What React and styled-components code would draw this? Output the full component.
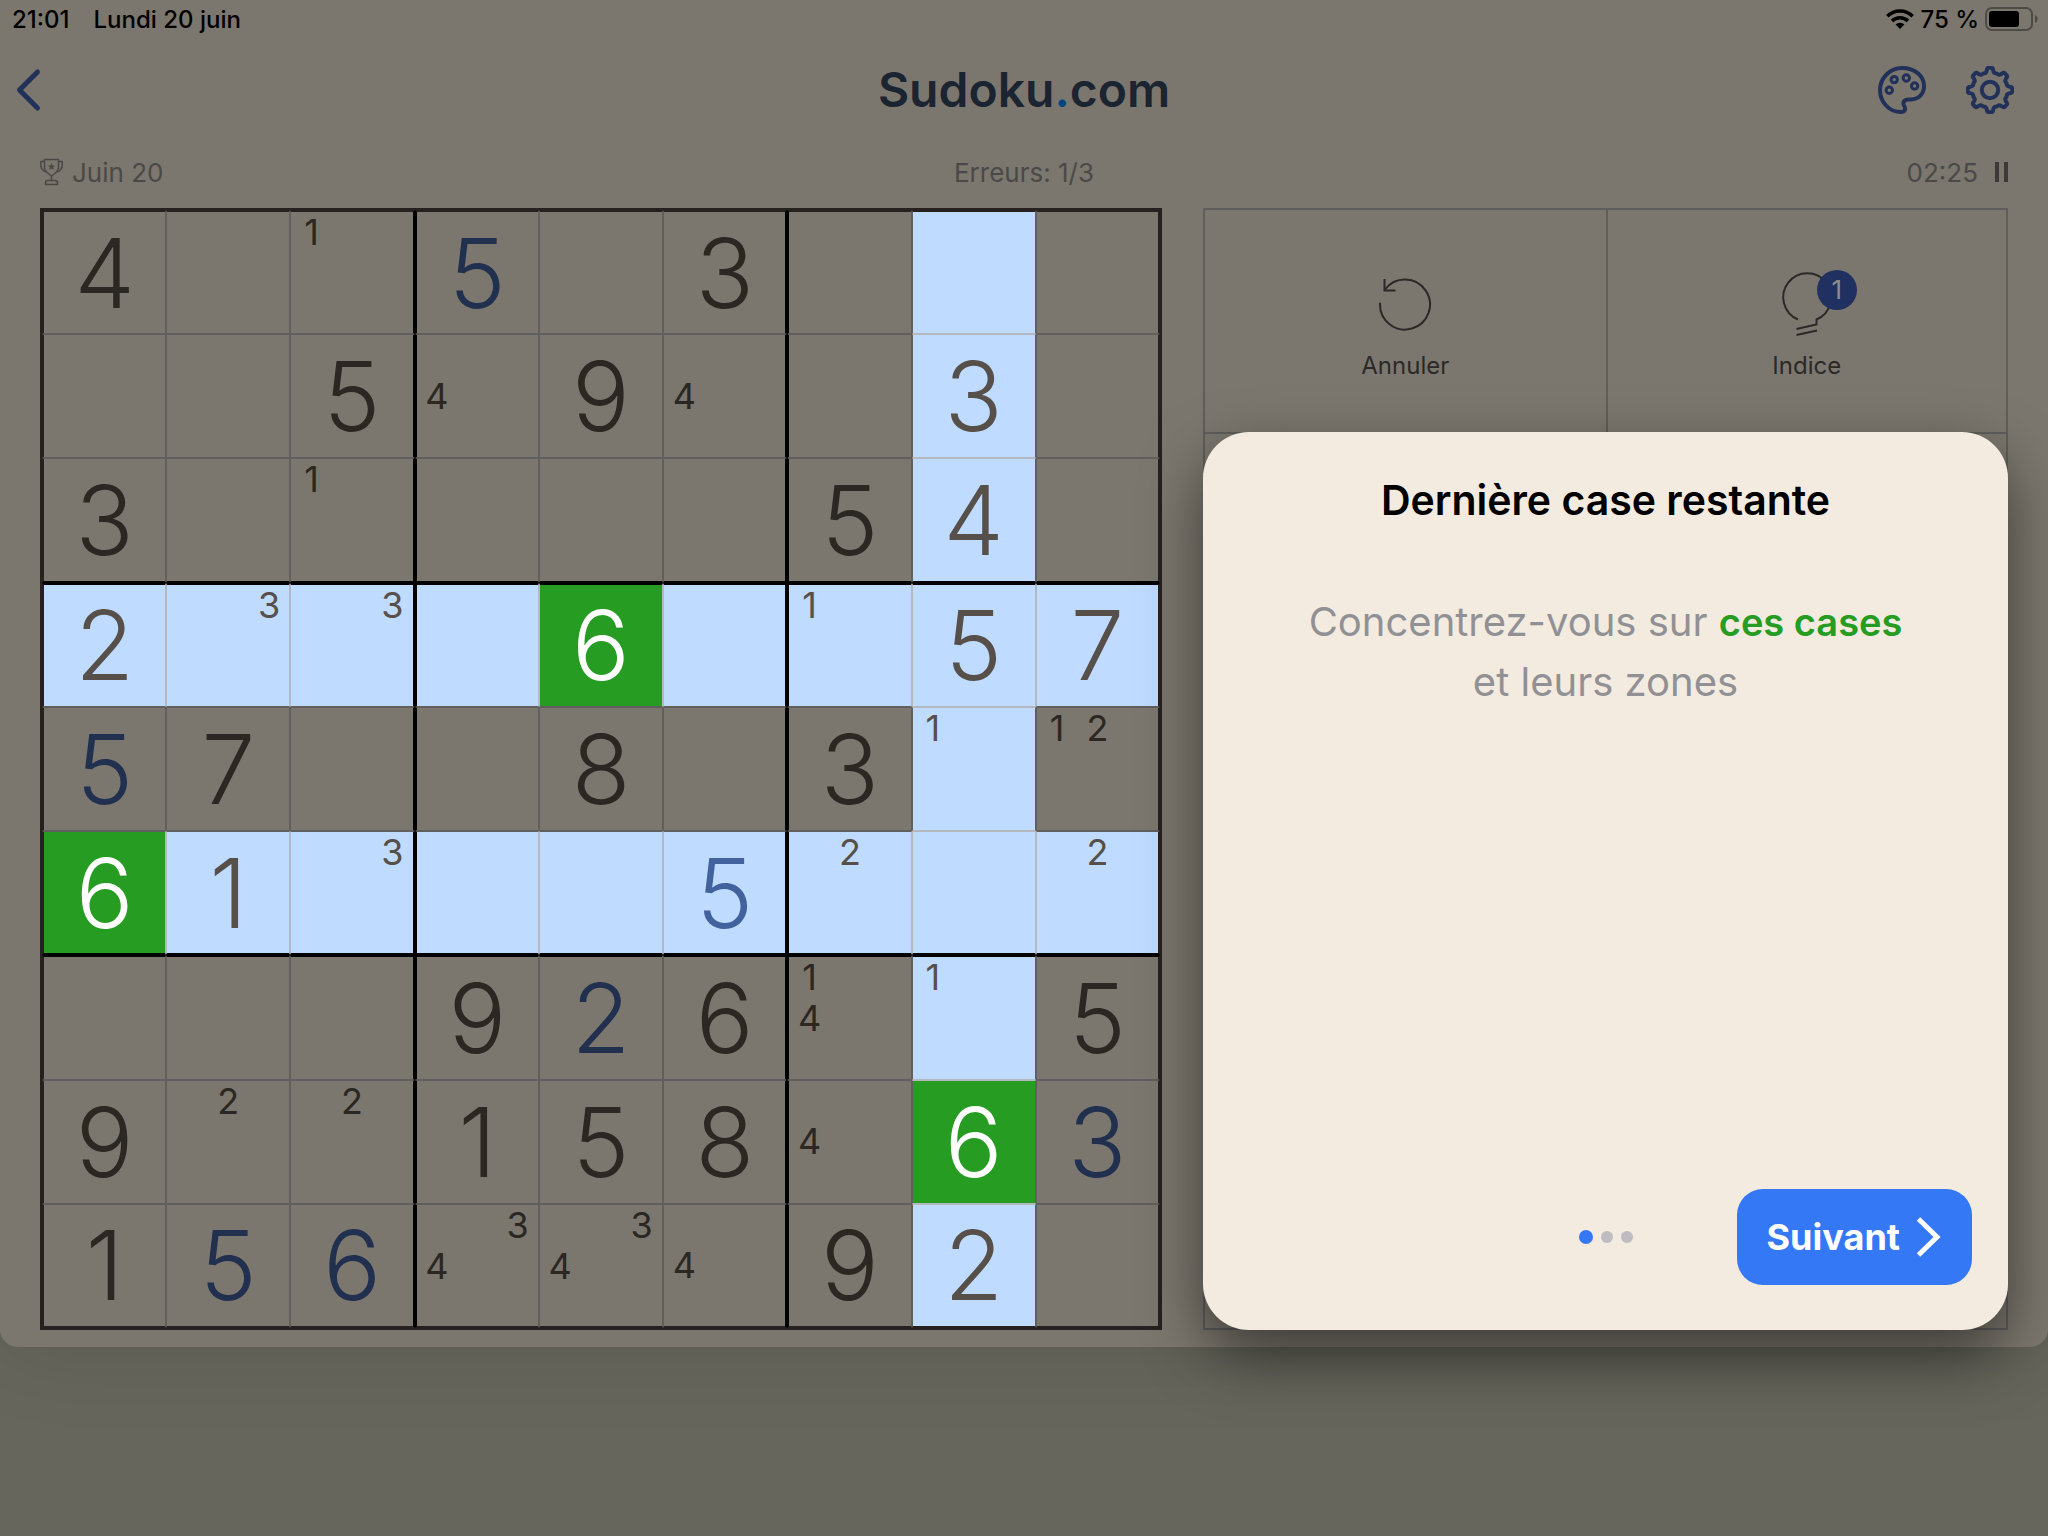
import React from 'react';
import styled, { createGlobalStyle, css } from 'styled-components';

const GlobalStyle = createGlobalStyle`
    * {
        box-sizing: border-box;
    }

    body {
        margin: 0;
        background: #66665c;
        font-family: Inter, "Liberation Sans", sans-serif;
    }

    button {
        margin: 0;
        padding: 0;
        border: 0;
        background: none;
        font: inherit;
        color: inherit;
        cursor: pointer;
    }

    svg {
        display: block;
    }
`;

const Page = styled.div`
    min-height: 100vh;
    background: #66665c;
    overflow: hidden;
`;

const Screen = styled.div`
    padding-bottom: 17px;
    border-radius: 0 0 18px 18px;
    background: #7b776e;
    box-shadow: 0 0 90px rgba(0, 0, 0, 0.12);
`;

const StatusBar = styled.div`
    display: flex;
    align-items: center;
    justify-content: space-between;
    height: 38px;
    padding: 0 10px 0 12px;
    font-size: 24px;
    font-weight: 500;
    color: #000;
`;

const StatusGroup = styled.div`
    display: flex;
    align-items: center;
    gap: ${({ $gap }) => $gap}px;
`;

const Header = styled.header`
    display: grid;
    grid-template-columns: 1fr auto 1fr;
    align-items: center;
    height: 104px;
    padding: 0 12px;
    color: #223159;
`;

const IconButton = styled.button`
    justify-self: start;
`;

const HeaderActions = styled.div`
    display: flex;
    justify-content: flex-end;
    gap: 40px;
    padding-right: 22px;
`;

const Logo = styled.h1`
    margin: 0;
    font-size: 48px;
    font-weight: 600;
    line-height: 60px;
    color: #1b2431;

    span {
        color: #00457f;
    }
`;

const InfoRow = styled.div`
    display: grid;
    grid-template-columns: 1fr auto 1fr;
    align-items: center;
    height: 66px;
    padding: 0 40px 6px;
    font-size: 26px;
    color: #4a4947;
`;

const InfoItem = styled.div`
    display: flex;
    align-items: center;
    justify-content: ${({ $end }) => $end ? 'flex-end' : 'flex-start'};
    gap: ${({ $end }) => $end ? 16 : 8}px;
`;

const Main = styled.main`
    display: grid;
    grid-template-columns: 1122fr 805fr;
    gap: 41px;
    padding: 0 40px;
`;

const Board = styled.div`
    display: grid;
    grid-template-columns: repeat(9, minmax(0, 1fr));
    grid-template-rows: repeat(9, minmax(0, 1fr));
    aspect-ratio: 1;
    border: 2px solid #26211e;
`;

const LINES = {
    edge: '2px solid #26211e',
    box: '2px solid #000',
    lit: '1px solid #b3b9bf',
    thin: '1px solid #605f5e'
};

const Cell = styled.button`
    display: flex;
    align-items: center;
    justify-content: center;
    border-top: ${({ $lines }) => LINES[$lines.top]};
    border-right: ${({ $lines }) => LINES[$lines.right]};
    border-bottom: ${({ $lines }) => LINES[$lines.bottom]};
    border-left: ${({ $lines }) => LINES[$lines.left]};
    font-size: 96px;
    font-weight: 300;
    line-height: 96px;
    color: ${({ $entered }) => $entered ? '#22304f' : '#2b2722'};

    ${({ $lit, $entered }) => $lit && css`
        background: #bfdbff;
        color: ${$entered ? '#41629d' : '#574f49'};
    `}

    ${({ $focus }) => $focus && css`
        background: #279c23;
        color: #fff;
    `}
`;

const Notes = styled.span`
    display: grid;
    grid-template-columns: repeat(3, 1fr);
    grid-template-rows: repeat(3, 1fr);
    align-self: stretch;
    flex: 1;
    font-size: 36px;
    font-weight: 400;
    line-height: 41px;
    text-align: center;
`;

const Panel = styled.div`
    display: grid;
    grid-template-columns: 1fr 1fr;
    grid-template-rows: 222px 1fr;
    border: 2px solid #5f5e5d;
`;

const ToolButton = styled.button`
    display: flex;
    flex-direction: column;
    align-items: center;
    justify-content: center;
    gap: 14px;
    padding-top: 12px;
    font-size: 24px;
    line-height: 32px;
    color: #2b2928;

    & + & {
        border-left: 2px solid #5f5e5d;
    }
`;

const ToolIcon = styled.span`
    position: relative;
`;

const Badge = styled.span`
    position: absolute;
    top: -2px;
    right: -22px;
    width: 40px;
    height: 40px;
    border-radius: 50%;
    background: #203161;
    color: #8f8d8b;
    font-size: 26px;
    line-height: 40px;
    text-align: center;
`;

const Hint = styled.section`
    display: flex;
    flex-direction: column;
    grid-column: 1 / -1;
    margin: 0 -2px -2px;
    padding: 44px 36px 45px;
    border-radius: 46px;
    background: #f3ebdf;
    box-shadow: 0 24px 60px rgba(0, 0, 0, 0.5);
    text-align: center;
`;

const HintSlot = styled.div`
    display: grid;
    grid-column: 1 / -1;
    border-top: 2px solid #5f5e5d;

    ${Hint} {
        margin-top: -2px;
    }
`;

const HintTitle = styled.h2`
    margin: 0 0 68px;
    font-size: 41px;
    font-weight: 600;
    line-height: 48px;
    color: #000;
`;

const HintText = styled.p`
    margin: 0;
    font-size: 40px;
    line-height: 60px;
    color: #919195;

    strong {
        font-size: 38px;
        font-weight: 600;
        color: #279c23;
    }
`;

const HintFooter = styled.div`
    display: grid;
    grid-template-columns: 1fr auto 1fr;
    align-items: center;
    margin-top: auto;
`;

const Dots = styled.div`
    display: flex;
    grid-column: 2;
    align-items: center;
    gap: 8px;
`;

const Dot = styled.span`
    width: ${({ $active }) => $active ? 14 : 12}px;
    height: ${({ $active }) => $active ? 14 : 12}px;
    border-radius: 50%;
    background: ${({ $active }) => $active ? '#3478f6' : '#bebcc2'};
`;

const NextButton = styled.button`
    display: flex;
    align-items: center;
    justify-self: end;
    gap: 16px;
    height: 96px;
    padding: 0 30px;
    border-radius: 26px;
    background: #3478f6;
    color: #fff;
    font-size: 36px;
    font-weight: 700;
`;

// u = entered by the player, g = highlighted by the hint, n = pencil notes
const PUZZLE = [
    ['4', '', 'n1', '5u', '', '3', '', '', ''],
    ['', '', '5', 'n4', '9', 'n4', '', '3', ''],
    ['3', '', 'n1', '', '', '', '5', '4', ''],
    ['2', 'n3', 'n3', '', '6g', '', 'n1', '5', '7'],
    ['5u', '7', '', '', '8', '', '3', 'n1', 'n12'],
    ['6g', '1', 'n3', '', '', '5u', 'n2', '', 'n2'],
    ['', '', '', '9', '2u', '6', 'n14', 'n1', '5'],
    ['9', 'n2', 'n2', '1', '5', '8', 'n4', '6g', '3u'],
    ['1', '5u', '6u', 'n34', 'n34', 'n4', '9', '2', '']
];

const isLit = (row, col) => row === 3 || row === 5 || col === 7;

const lineBetween = (row, col, nextRow, nextCol) => {
    if (nextRow < 0 || nextRow > 8 || nextCol < 0 || nextCol > 8) {
        return 'edge';
    }
    if (Math.floor(row / 3) !== Math.floor(nextRow / 3) || Math.floor(col / 3) !== Math.floor(nextCol / 3)) {
        return 'box';
    }
    return isLit(row, col) && isLit(nextRow, nextCol) ? 'lit' : 'thin';
};

const BoardCell = ({ value, row, col }) => {
    const isNotes = value.startsWith('n');
    const lines = {
        top: lineBetween(row, col, row - 1, col),
        right: lineBetween(row, col, row, col + 1),
        bottom: lineBetween(row, col, row + 1, col),
        left: lineBetween(row, col, row, col - 1)
    };

    return (
        <Cell
            type='button'
            $lines={lines}
            $lit={isLit(row, col)}
            $entered={value.endsWith('u')}
            $focus={value.endsWith('g')}
        >
            {isNotes
                ? <Notes>
                    {[1, 2, 3, 4, 5, 6, 7, 8, 9].map((n) => (
                        <span key={n}>{value.includes(n) ? n : ''}</span>
                    ))}
                </Notes>
                : value.charAt(0)
            }
        </Cell>
    );
};

const polar = (radius, degrees) => {
    const angle = degrees * Math.PI / 180;
    return `${(24 + radius * Math.cos(angle)).toFixed(2)} ${(24 + radius * Math.sin(angle)).toFixed(2)}`;
};

// eight teeth with rounded shoulders
const gearPath = [0, 45, 90, 135, 180, 225, 270, 315].map((a, i) => (
    `${i ? 'L' : 'M'}${polar(20, a - 9)} Q${polar(22.5, a - 8)} ${polar(22.3, a - 3)} L${polar(22.3, a + 3)} Q${polar(22.5, a + 8)} ${polar(20, a + 9)} Q${polar(17.2, a + 13)} ${polar(17.6, a + 18)} Q${polar(18.2, a + 22.5)} ${polar(17.6, a + 27)} Q${polar(17.2, a + 32)} ${polar(20, a + 36)}`
)).join(' ') + 'Z';

const BackIcon = () => (
    <svg width='32' height='48' viewBox='0 0 32 48' fill='none' stroke='currentColor' strokeWidth='5' strokeLinecap='round' strokeLinejoin='round'>
        <path d='M25.500 6L7.500 24l18 18'/>
    </svg>
);

const PaletteIcon = () => (
    <svg width='48' height='48' viewBox='0 0 48 48' fill='none' stroke='currentColor' strokeWidth='4'>
        <path d='M24 2C37 2 46 10 46 20C46 28.500 40 33.500 33 33.500H30.500C26 33.500 24.500 36.500 26 39.500C28.500 43.500 26.500 46 23 46C11 46 2 36 2 24C2 12 12 2 24 2Z'/>
        <g strokeWidth='3'>
            <circle cx='11.300' cy='24.300' r='3.200'/>
            <circle cx='16.200' cy='13.600' r='3.200'/>
            <circle cx='28.300' cy='12' r='3.200'/>
            <circle cx='36.600' cy='20' r='3.200'/>
        </g>
    </svg>
);

const GearIcon = () => (
    <svg width='48' height='48' viewBox='0 0 48 48' fill='none' stroke='currentColor' strokeWidth='4' strokeLinejoin='round'>
        <path d={gearPath}/>
        <circle cx='24' cy='24' r='8.200'/>
    </svg>
);

const WifiIcon = () => (
    <svg width='28' height='20' viewBox='0 0 28 20' fill='none' stroke='#000' strokeWidth='3.600'>
        <path d='M1.300 7.200a18 18 0 0 1 25.400 0'/>
        <path d='M6 12a11.500 11.500 0 0 1 16 0'/>
        <path d='M14 20l-4.400-4.600a6.500 6.500 0 0 1 8.800 0z' fill='#000' stroke='none'/>
    </svg>
);

const BatteryIcon = () => (
    <svg width='53' height='24' viewBox='0 0 53 24'>
        <rect x='1' y='1' width='46' height='22' rx='6' fill='none' stroke='#4d4b46' strokeWidth='2'/>
        <rect x='4' y='4' width='30' height='16' rx='3' fill='#000'/>
        <path d='M50 8c3.500 1.500 3.500 6.500 0 8z' fill='#4d4b46'/>
    </svg>
);

const TrophyIcon = () => (
    <svg width='24' height='28' viewBox='0 0 24 28' fill='none' stroke='currentColor' strokeWidth='1.500' strokeLinejoin='round'>
        <path d='M4.500 1.500h14v8c0 3.500-2.500 5.500-7 8.500c-4.500-3-7-5-7-8.500z'/>
        <path d='M4.500 3.500H.8v4c0 3 1.700 5 5.200 6.500M18.500 3.500h3.700v4c0 3-1.700 5-5.200 6.500'/>
        <path d='M11.500 18v4.500M5.500 26.500v-1.500c0-1.500 1-2.500 2.500-2.500h7c1.500 0 2.500 1 2.500 2.500v1.500z'/>
        <path d='M11.500 5l1.100 2.400 2.500.2-1.900 1.700.6 2.500-2.300-1.300-2.300 1.300.6-2.500-1.900-1.700 2.500-.2z' fill='currentColor' stroke='none'/>
    </svg>
);

const PauseIcon = () => (
    <svg width='14' height='20' viewBox='0 0 14 20' fill='#3b3a39'>
        <path d='M1 0h4v20H1zM10 0h4v20h-4z'/>
    </svg>
);

const UndoIcon = () => (
    <svg width='56' height='64' viewBox='0 0 56 64' fill='none' stroke='currentColor' strokeWidth='2' strokeLinecap='round'>
        <path d='M3 31.500A25 25 0 1 0 8 17.500'/>
        <path d='M7.500 7V18.500H18.500' strokeLinecap='butt'/>
    </svg>
);

const BulbIcon = () => (
    <svg width='56' height='64' viewBox='0 0 56 64' fill='none' stroke='currentColor' strokeWidth='2'>
        <path d='M19 47.500A24 24 0 1 1 37.500 47.500V52.500L17.500 57'/>
        <path d='M17.500 63L38 58.500'/>
    </svg>
);

const NextIcon = () => (
    <svg width='26' height='40' viewBox='0 0 26 40' fill='none' stroke='currentColor' strokeWidth='5'>
        <path d='M2.500 2L21 20L2.500 38'/>
    </svg>
);

const App = () => (
    <Page>
        <GlobalStyle/>
        <Screen>
            <StatusBar>
                <StatusGroup $gap={24}>
                    <span>21:01</span>
                    <span>Lundi 20 juin</span>
                </StatusGroup>
                <StatusGroup $gap={6}>
                    <WifiIcon/>
                    <span>75 %</span>
                    <BatteryIcon/>
                </StatusGroup>
            </StatusBar>
            <Header>
                <IconButton type='button' aria-label='Retour'><BackIcon/></IconButton>
                <Logo>Sudoku<span>.</span>com</Logo>
                <HeaderActions>
                    <IconButton type='button' aria-label='Thème'><PaletteIcon/></IconButton>
                    <IconButton type='button' aria-label='Réglages'><GearIcon/></IconButton>
                </HeaderActions>
            </Header>
            <InfoRow>
                <InfoItem><TrophyIcon/>Juin 20</InfoItem>
                <span>Erreurs: 1/3</span>
                <InfoItem $end>
                    02:25
                    <IconButton type='button' aria-label='Pause'><PauseIcon/></IconButton>
                </InfoItem>
            </InfoRow>
            <Main>
                <Board>
                    {PUZZLE.map((cells, row) => cells.map((value, col) => (
                        <BoardCell key={`${row}-${col}`} value={value} row={row} col={col}/>
                    )))}
                </Board>
                <Panel>
                    <ToolButton type='button'>
                        <ToolIcon><UndoIcon/></ToolIcon>
                        Annuler
                    </ToolButton>
                    <ToolButton type='button'>
                        <ToolIcon>
                            <BulbIcon/>
                            <Badge>1</Badge>
                        </ToolIcon>
                        Indice
                    </ToolButton>
                    <HintSlot>
                        <Hint>
                            <HintTitle>Dernière case restante</HintTitle>
                            <HintText>
                                Concentrez-vous sur <strong>ces cases</strong>
                                <br/>
                                et leurs zones
                            </HintText>
                            <HintFooter>
                                <Dots>
                                    <Dot $active/>
                                    <Dot/>
                                    <Dot/>
                                </Dots>
                                <NextButton type='button'>
                                    Suivant
                                    <NextIcon/>
                                </NextButton>
                            </HintFooter>
                        </Hint>
                    </HintSlot>
                </Panel>
            </Main>
        </Screen>
    </Page>
);

export default App;
